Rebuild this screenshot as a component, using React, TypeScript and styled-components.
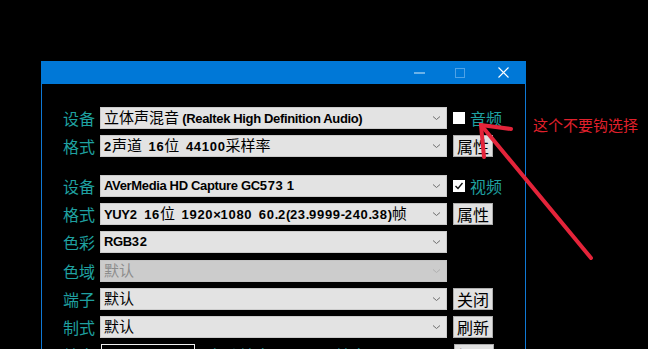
import React from "react";
import styled, { createGlobalStyle } from "styled-components";

const Global = createGlobalStyle`
  html, body { margin: 0; padding: 0; background: #000; }
  body { overflow: hidden; }
`;

const TEAL = "#1fa0a0";
const CJK_FONT = `"Noto Sans CJK SC", "Noto Sans", sans-serif`;

const Page = styled.div`
  position: relative;
  width: 648px;
  height: 349px;
  overflow: hidden;
  background: #000;
  padding: 61px 0 0 41px;
  box-sizing: border-box;
`;

const Window = styled.div`
  width: 485px;
  height: 300px;
  box-sizing: border-box;
  border: 1px solid #0f78d4;
  border-top: none;
  background: #000;
`;

const TitleBar = styled.div`
  height: 23px;
  margin: 0 -1px;
  background: #0078d7;
  display: flex;
  justify-content: flex-end;
  align-items: stretch;
`;

const TitleButton = styled.div<{ $w: number }>`
  width: ${(p) => p.$w}px;
  display: flex;
  align-items: center;
  justify-content: center;
`;

const Body = styled.div`
  padding: 23px 0 0 21px;
  display: flex;
  flex-direction: column;
  gap: 17.8px;
`;

const Group = styled.div`
  display: flex;
  flex-direction: column;
  gap: 6.2px;
`;

const Row = styled.div`
  display: flex;
  align-items: center;
  height: 22px;
`;

const Label = styled.div`
  width: 32px;
  margin-right: 5px;
  color: ${TEAL};
  font-family: ${CJK_FONT};
  font-size: 16px;
  line-height: 22px;
  white-space: nowrap;
`;

const Combo = styled.div<{ $disabled?: boolean }>`
  width: 347px;
  height: 22px;
  box-sizing: border-box;
  display: flex;
  align-items: center;
  padding: 0 5px 0 3px;
  background: ${(p) => (p.$disabled ? "#cccccc" : "#e3e3e3")};
  border: 1px solid ${(p) => (p.$disabled ? "#c4c4c4" : "#cbcbcb")};
  color: ${(p) => (p.$disabled ? "#8c8c8c" : "#000")};
`;

const ComboText = styled.div`
  flex: 1;
  white-space: pre;
  overflow: hidden;
  font-family: "Liberation Sans", ${CJK_FONT};
  font-size: 13px;
  line-height: 20px;
`;

const Lat = styled.span`
  font-weight: 700;
  letter-spacing: -0.35px;
`;

const Num = styled.span`
  font-weight: 700;
  letter-spacing: 0.7px;
`;

const Han = styled.span`
  font-family: ${CJK_FONT};
  font-size: 15px;
  font-weight: 400;
`;

const Side = styled.div`
  margin-left: 6px;
  display: flex;
  align-items: center;
`;

const Button = styled.button`
  width: 40px;
  height: 22px;
  padding: 0;
  box-sizing: border-box;
  background: #e1e1e1;
  border: 1px solid #adadad;
  color: #000;
  font-family: ${CJK_FONT};
  font-size: 16px;
  line-height: 20px;
  white-space: nowrap;
`;

const Check = styled.div`
  width: 12px;
  height: 12px;
  background: #fff;
  margin-right: 5px;
  display: flex;
  align-items: center;
  justify-content: center;
`;

const SideLabel = styled.span`
  color: ${TEAL};
  font-family: ${CJK_FONT};
  font-size: 16px;
  line-height: 22px;
`;

const Field = styled.div`
  width: 94px;
  height: 22px;
  box-sizing: border-box;
  margin-left: 1px;
  border: 1px solid #f0f0f0;
  background: #000;
`;

const TealText = styled.span<{ $ml: number }>`
  margin-left: ${(p) => p.$ml}px;
  color: ${TEAL};
  font-family: ${CJK_FONT};
  font-size: 16px;
  line-height: 22px;
  white-space: nowrap;
`;

const BottomSide = styled.div`
  margin-left: auto;
  margin-right: 31px;
`;

const Overlay = styled.svg`
  position: absolute;
  left: 0;
  top: 0;
  pointer-events: none;
`;

const Note = styled.div`
  position: absolute;
  left: 533px;
  top: 115px;
  color: #e0202c;
  font-family: ${CJK_FONT};
  font-size: 15px;
  line-height: 20px;
  white-space: nowrap;
`;

const CJK = /([\u2E80-\u9FFF\uF900-\uFAFF\uFF00-\uFFEF]+)/;
const DIGITS = /(\d+)/;

function Mixed({ text }: { text: string }) {
  const out: React.ReactNode[] = [];
  text
    .split(CJK)
    .filter((s) => s.length > 0)
    .forEach((s, i) => {
      if (CJK.test(s)) {
        out.push(<Han key={`h${i}`}>{s}</Han>);
      } else {
        s.split(DIGITS)
          .filter((t) => t.length > 0)
          .forEach((t, j) => {
            out.push(
              DIGITS.test(t) ? (
                <Num key={`n${i}-${j}`}>{t}</Num>
              ) : (
                <Lat key={`l${i}-${j}`}>{t}</Lat>
              )
            );
          });
      }
    });
  return <>{out}</>;
}

function Chevron({ light }: { light?: boolean }) {
  return (
    <svg width="9" height="6" viewBox="0 0 9 6">
      <path
        d="M1 1.5 L4.5 4.5 L8 1.5"
        fill="none"
        stroke={light ? "#b0b0b0" : "#6e6e6e"}
        strokeWidth="1"
      />
    </svg>
  );
}

function Select({ text, disabled }: { text: string; disabled?: boolean }) {
  return (
    <Combo $disabled={disabled}>
      <ComboText>
        <Mixed text={text} />
      </ComboText>
      <Chevron light={disabled} />
    </Combo>
  );
}

function CheckMark() {
  return (
    <svg width="10" height="10" viewBox="0 0 10 10">
      <path d="M1.5 5 L4 7.5 L8.5 2" fill="none" stroke="#111" strokeWidth="1.4" />
    </svg>
  );
}

export default function App() {
  return (
    <>
      <Global />
      <Page>
        <Window>
          <TitleBar>
            <TitleButton $w={38}>
              <svg width="12" height="2" viewBox="0 0 12 2">
                <rect x="0" y="0.5" width="11" height="1" fill="#d8ebfa" />
              </svg>
            </TitleButton>
            <TitleButton $w={42}>
              <svg width="10" height="10" viewBox="0 0 10 10">
                <rect x="0.5" y="0.5" width="9" height="9" fill="none" stroke="#4fa2e6" />
              </svg>
            </TitleButton>
            <TitleButton $w={45}>
              <svg width="11" height="11" viewBox="0 0 11 11">
                <path d="M0.5 0.5 L10.5 10.5 M10.5 0.5 L0.5 10.5" stroke="#fff" strokeWidth="1.1" />
              </svg>
            </TitleButton>
          </TitleBar>
          <Body>
            <Group>
              <Row>
                <Label>设备</Label>
                <Select text="立体声混音 (Realtek High Definition Audio)" />
                <Side>
                  <Check />
                  <SideLabel>音频</SideLabel>
                </Side>
              </Row>
              <Row>
                <Label>格式</Label>
                <Select text="2声道  16位  44100采样率" />
                <Side>
                  <Button>属性</Button>
                </Side>
              </Row>
            </Group>
            <Group>
              <Row>
                <Label>设备</Label>
                <Select text="AVerMedia HD Capture GC573 1" />
                <Side>
                  <Check>
                    <CheckMark />
                  </Check>
                  <SideLabel>视频</SideLabel>
                </Side>
              </Row>
              <Row>
                <Label>格式</Label>
                <Select text="YUY2  16位  1920×1080  60.2(23.9999-240.38)帧" />
                <Side>
                  <Button>属性</Button>
                </Side>
              </Row>
              <Row>
                <Label>色彩</Label>
                <Select text="RGB32" />
              </Row>
              <Row>
                <Label>色域</Label>
                <Select text="默认" disabled />
              </Row>
              <Row>
                <Label>端子</Label>
                <Select text="默认" />
                <Side>
                  <Button>关闭</Button>
                </Side>
              </Row>
              <Row>
                <Label>制式</Label>
                <Select text="默认" />
                <Side>
                  <Button>刷新</Button>
                </Side>
              </Row>
              <Row>
                <Label>帧率</Label>
                <Field />
                <TealText $ml={12}>自动帧率</TealText>
                <TealText $ml={32}>显示帧率</TealText>
                <BottomSide>
                  <Button>设置</Button>
                </BottomSide>
              </Row>
            </Group>
          </Body>
        </Window>
        <Overlay width="648" height="349" viewBox="0 0 648 349">
          <g stroke="#e4243a" strokeWidth="4" strokeLinecap="round" fill="none">
            <path d="M511 129 L481 125 L484 157" />
            <path d="M481 125 L591 258" />
          </g>
        </Overlay>
        <Note>这个不要钩选择</Note>
      </Page>
    </>
  );
}
